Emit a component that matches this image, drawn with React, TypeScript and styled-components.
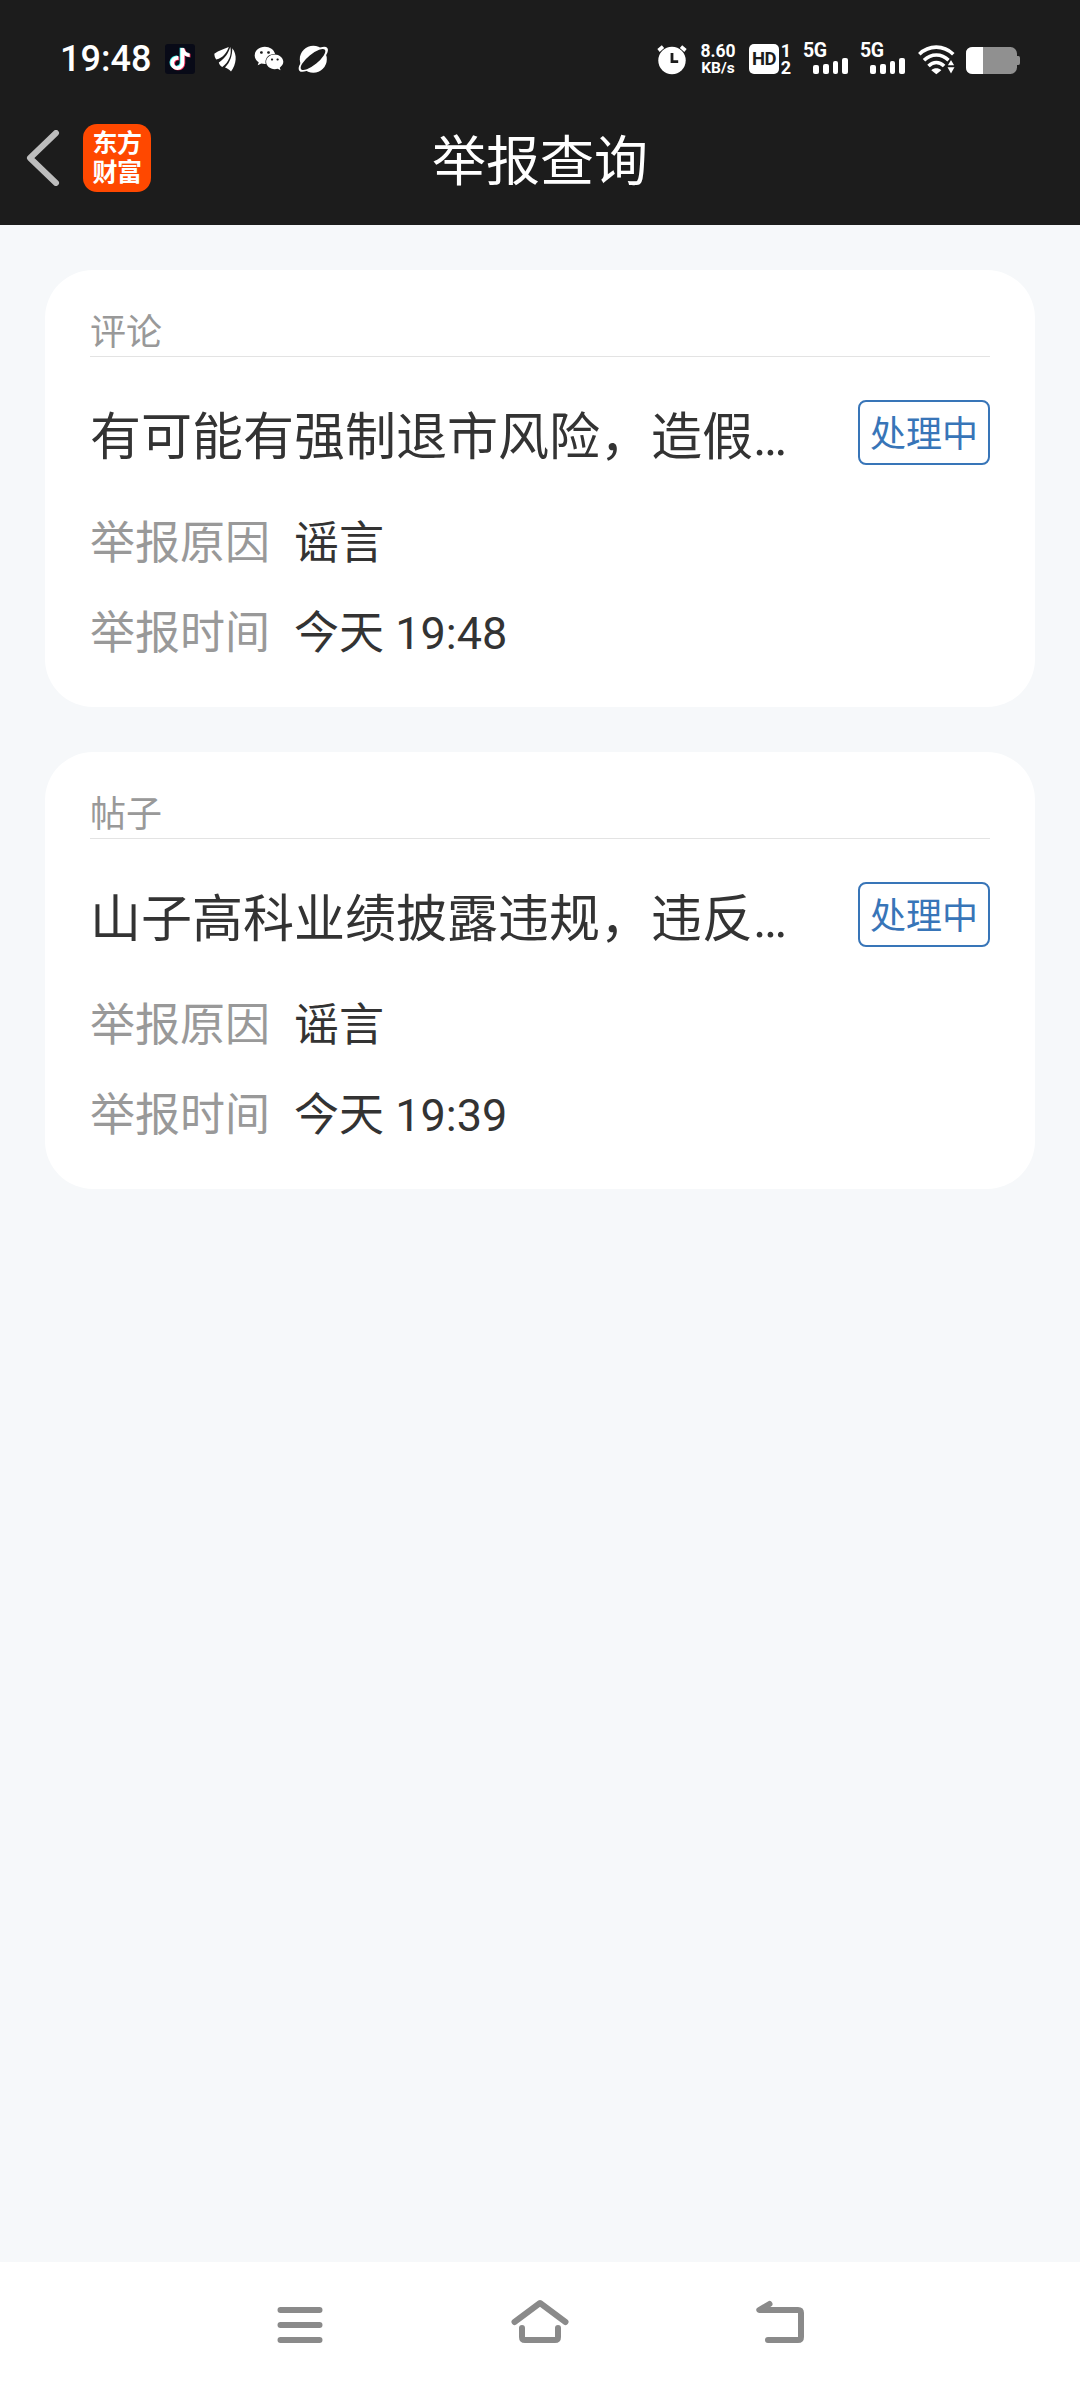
import React from "react";
import styled, { createGlobalStyle } from "styled-components";
import { FaTiktok, FaWeixin } from "react-icons/fa6";

const GlobalStyle = createGlobalStyle`
  * { box-sizing: border-box; }
  body {
    margin: 0;
    background: #f6f8fa;
    font-family: Roboto, "Noto Sans CJK SC", sans-serif;
    color: #333;
  }
`;

const Page = styled.div`
  display: flex;
  flex-direction: column;
  width: 1080px;
  height: 2388px;
  overflow: hidden;
  background: #f6f8fa;
`;

const TopArea = styled.header`
  height: 225px;
  background: #1c1c1c;
  color: #fff;
`;

const StatusBar = styled.div`
  display: flex;
  justify-content: space-between;
  height: 90px;
  padding: 44px 60px 0;
`;

const StatusGroup = styled.div`
  display: flex;
  align-items: flex-start;
  height: 30px;
`;

const Clock = styled.span`
  width: 90px;
  margin-right: 15px;
  font-size: 36px;
  font-weight: 500;
  line-height: 30px;
`;

const TiktokTile = styled.span`
  display: grid;
  place-items: center;
  width: 30px;
  height: 30px;
  border-radius: 3px;
  background: #080a17;
`;

const NoteLayer = styled(FaTiktok)<{ $tint: string; $shift: number }>`
  grid-area: 1 / 1;
  width: 20px;
  height: 22px;
  color: ${(p) => p.$tint};
  transform: translate(${(p) => p.$shift}px, ${(p) => p.$shift * 0.6}px);
`;

const StatusIcon = styled.svg<{ $gap: number }>`
  display: block;
  flex: none;
  overflow: visible;
  margin-left: ${(p) => p.$gap}px;
`;

const WechatIcon = styled(FaWeixin)`
  width: 30px;
  height: 27px;
  margin: 1px 0 0 17px;
`;

const Speed = styled.div`
  width: 36px;
  margin-left: 13px;
  font-weight: 700;
  text-align: center;
  white-space: nowrap;
`;

const SpeedValue = styled.div`
  font-size: 17.5px;
  line-height: 15px;
`;

const SpeedUnit = styled.div`
  font-size: 15.5px;
  line-height: 18px;
`;

const HdTile = styled.span`
  display: flex;
  align-items: center;
  justify-content: center;
  width: 30px;
  height: 30px;
  margin-left: 13px;
  border-radius: 5px;
  background: #fff;
  color: #1c1c1c;
  font-size: 18.5px;
  font-weight: 700;
  letter-spacing: -0.5px;
`;

const SimDigits = styled.span`
  display: flex;
  flex-direction: column;
  width: 12px;
  margin: -2px 0 0 1px;
  font-size: 18px;
  font-weight: 700;
  line-height: 17px;
  text-align: center;
`;

const Signal = styled.div<{ $gap: number }>`
  display: flex;
  flex-direction: column;
  width: 45px;
  height: 30px;
  margin-left: ${(p) => p.$gap}px;
  font-size: 19.5px;
  font-weight: 700;
  line-height: 14px;
  letter-spacing: -0.4px;
`;

const Bars = styled.div`
  display: flex;
  align-items: flex-end;
  justify-content: flex-end;
  gap: 4px;
  height: 16px;
`;

const Bar = styled.i<{ $h: number }>`
  width: 5.7px;
  height: ${(p) => p.$h}px;
  border-radius: 2px;
  background: #fff;
`;

const NavBar = styled.div`
  display: grid;
  grid-template-columns: 1fr 216px 1fr;
  align-items: center;
  height: 135px;
`;

const NavLeft = styled.div`
  display: flex;
  align-items: center;
  padding-left: 26px;
`;

const BackIcon = styled.svg`
  display: block;
  margin-right: 23px;
`;

const AppLogo = styled.div`
  display: flex;
  flex-direction: column;
  align-items: center;
  width: 68px;
  height: 68px;
  padding-top: 5px;
  border-radius: 14px;
  background: #ff4800;
  font-size: 25px;
  font-weight: 700;
  line-height: 29px;
  letter-spacing: -0.5px;
`;

const PageTitle = styled.h1`
  margin: 0;
  padding-top: 11px;
  font-size: 54px;
  font-weight: 400;
  line-height: 70px;
  white-space: nowrap;
`;

const List = styled.main`
  display: flex;
  flex: 1;
  flex-direction: column;
  gap: 45px;
  padding: 45px;
`;

const Card = styled.section`
  height: 437px;
  padding: 39px 45px 0;
  border-radius: 48px;
  background: #fff;
`;

const Kind = styled.div`
  height: 48px;
  border-bottom: 1px solid #e3e3e3;
  color: #999;
  font-size: 36px;
  line-height: 49px;
`;

const CardHead = styled.div`
  display: flex;
  align-items: flex-start;
  justify-content: space-between;
  height: 142px;
  padding-top: 43px;
`;

const Subject = styled.h2`
  margin: 0;
  padding-top: 5px;
  font-size: 51px;
  font-weight: 400;
  line-height: 65px;
  white-space: nowrap;
`;

const Badge = styled.span`
  width: 132px;
  height: 65px;
  border: 2px solid #3875b8;
  border-radius: 8px;
  color: #3875b8;
  font-size: 36px;
  line-height: 67px;
  text-align: center;
`;

const Field = styled.div`
  display: flex;
  gap: 24px;
  font-size: 45px;
  line-height: 90px;
`;

const FieldName = styled.span`
  color: #999;
`;

const SystemNav = styled.footer`
  display: flex;
  justify-content: center;
  gap: 180px;
  height: 126px;
  padding-top: 28px;
  background: #fff;
`;

const NavIcon = styled.svg`
  display: block;
  width: 60px;
  height: 60px;
  fill: none;
  stroke: #8a8a8a;
  stroke-width: 6;
  stroke-linecap: round;
  stroke-linejoin: round;
`;

const reports = [
  { kind: "评论", subject: "有可能有强制退市风险，造假…", reason: "谣言", time: "今天 19:48" },
  { kind: "帖子", subject: "山子高科业绩披露违规，违反…", reason: "谣言", time: "今天 19:39" },
];

function MobileSignal({ gap }: { gap: number }) {
  return (
    <Signal $gap={gap}>
      5G
      <Bars>
        {[9, 10.5, 13, 16.5].map((h) => (
          <Bar key={h} $h={h} />
        ))}
      </Bars>
    </Signal>
  );
}

export default function App() {
  return (
    <Page>
      <GlobalStyle />
      <TopArea>
        <StatusBar>
          <StatusGroup>
            <Clock>19:48</Clock>
            <TiktokTile>
              <NoteLayer $tint="#3ff0ee" $shift={-0.9} />
              <NoteLayer $tint="#fb2c57" $shift={0.9} />
              <NoteLayer $tint="#fff" $shift={0} />
            </TiktokTile>
            <StatusIcon $gap={19} width="23" height="30" viewBox="0 0 23 30" fill="#fff">
              <path d="M.3 9.800C5 6.200 9.500 5.500 14.800 3 12.800 8.500 9.500 13.500 2.300 15.600 1 14 .4 12 .3 9.800Z" />
              <path d="M4.800 18.500C10.800 14.500 14.300 9.500 16.300 3c1.700 7.500-1.500 15.300-8 20C6.600 22 5.300 20.500 4.800 18.500Z" />
              <path d="M11 23.500C16.500 18 18.200 11.500 18.300 4.300 23.500 11 22.500 20 17 27.600 15.500 25.700 13.500 24.300 11 23.500Z" />
            </StatusIcon>
            <WechatIcon />
            <StatusIcon $gap={14} width="31" height="30" viewBox="0 0 31 30">
              <circle cx="15.300" cy="15.300" r="13.500" fill="#fff" />
              <ellipse cx="15.300" cy="15.300" rx="18" ry="6.800" fill="#fff" transform="rotate(-39 15.300 15.300)" />
              <ellipse cx="15" cy="15.500" rx="15.300" ry="5.200" fill="#1c1c1c" transform="rotate(-39 15 15.500)" />
            </StatusIcon>
          </StatusGroup>

          <StatusGroup>
            <StatusIcon $gap={0} width="30" height="30" viewBox="0 0 30 30">
              <circle cx="15" cy="16.500" r="13.700" fill="#fff" />
              <path d="M1.500 6.500 6 2.700M28.500 6.500 24 2.700" stroke="#fff" strokeWidth="3.600" />
              <path d="M15 9v8.700h6.200" fill="none" stroke="#1c1c1c" strokeWidth="2.800" />
            </StatusIcon>
            <Speed>
              <SpeedValue>8.60</SpeedValue>
              <SpeedUnit>KB/s</SpeedUnit>
            </Speed>
            <HdTile>HD</HdTile>
            <SimDigits>
              <span>1</span>
              <span>2</span>
            </SimDigits>
            <MobileSignal gap={11} />
            <MobileSignal gap={12} />
            <StatusIcon $gap={13} width="37" height="30" viewBox="0 0 37 30">
              <g fill="none" stroke="#fff" strokeWidth="3.600">
                <path d="M1.300 10.200C11 .8 25.500.8 35.300 10.200" />
                <path d="M6 16.200c7.300-7 17.500-7 24.600 0" />
                <path d="M10.500 22c4.800-4.500 10.800-4.500 15.600 0" />
              </g>
              <path d="M13.300 26.300c3-2.600 7-2.600 10 0l-5 4Z" fill="#fff" />
              <path d="M33 14.500 37.500 22h-9Z" fill="#fff" stroke="#1c1c1c" strokeWidth="1.500" />
              <path d="M29.500 23.300h7L33 29.500Z" fill="#fff" />
            </StatusIcon>
            <StatusIcon $gap={11} width="54" height="30" viewBox="0 0 54 30">
              <rect x="0" y="3" width="51" height="27" rx="6.500" fill="#909090" />
              <path d="M51 12h1.500Q54 12 54 14v5q0 2-1.500 2H51Z" fill="#909090" />
              <path d="M17 3v27H6.500Q0 30 0 23.500v-14Q0 3 6.500 3Z" fill="#fff" />
            </StatusIcon>
          </StatusGroup>
        </StatusBar>

        <NavBar>
          <NavLeft>
            <BackIcon width="34" height="56" viewBox="0 0 34 56">
              <path
                d="M30 3 4 28l26 25"
                fill="none"
                stroke="#bdbdbd"
                strokeWidth="6"
                strokeLinecap="round"
                strokeLinejoin="round"
              />
            </BackIcon>
            <AppLogo>
              <span>东方</span>
              <span>财富</span>
            </AppLogo>
          </NavLeft>
          <PageTitle>举报查询</PageTitle>
        </NavBar>
      </TopArea>

      <List>
        {reports.map((r) => (
          <Card key={r.kind}>
            <Kind>{r.kind}</Kind>
            <CardHead>
              <Subject>{r.subject}</Subject>
              <Badge>处理中</Badge>
            </CardHead>
            <Field>
              <FieldName>举报原因</FieldName>
              <span>{r.reason}</span>
            </Field>
            <Field>
              <FieldName>举报时间</FieldName>
              <span>{r.time}</span>
            </Field>
          </Card>
        ))}
      </List>

      <SystemNav>
        <NavIcon viewBox="270 2290 60 60">
          <path d="M280.500 2310h39M280.500 2325h39M280.500 2340h39" />
        </NavIcon>
        <NavIcon viewBox="510 2290 60 60">
          <path d="M514.500 2322 540 2303 565.500 2322M522 2328V2337q0 3 3 3h30q3 0 3-3v-9" />
        </NavIcon>
        <NavIcon viewBox="750 2290 60 60">
          <path d="M769.500 2304 759.300 2310H798q3 0 3 3V2337q0 3-3 3H768" />
        </NavIcon>
      </SystemNav>
    </Page>
  );
}
